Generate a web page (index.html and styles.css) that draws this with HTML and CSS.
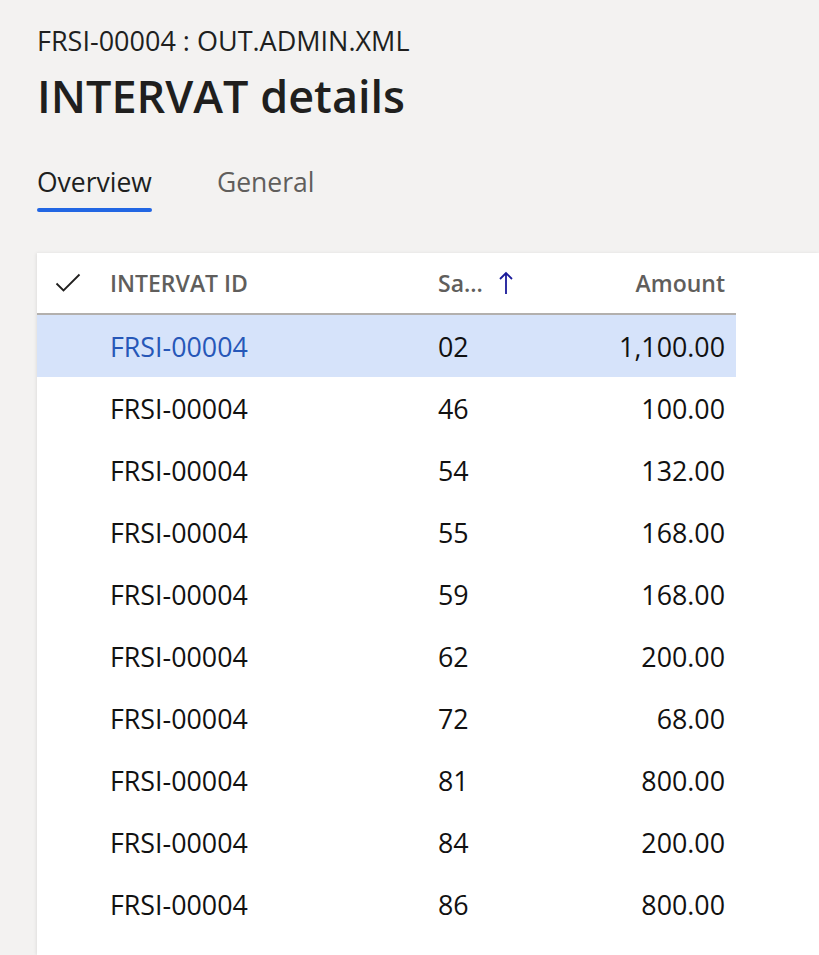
FILE: index.html
```html
<!DOCTYPE html>
<html>
<head>
<meta charset="utf-8">
<link rel="stylesheet" href="styles.css">
</head>
<body>
<div class="page">
  <div class="caption">FRSI-00004 : OUT.ADMIN.XML</div>
  <h1 class="title">INTERVAT details</h1>
  <div class="tabs">
    <div class="tab active">Overview</div>
    <div class="tab">General</div>
  </div>
  <div class="panel">
    <div class="grid">
      <div class="row head">
        <div class="c-check">
          <svg width="26" height="20" viewBox="0 0 26 20"><path d="M1.5 10.5 L8.5 17.5 L24.5 1.5" fill="none" stroke="#201f1e" stroke-width="1.8"/></svg>
        </div>
        <div class="c-id">INTERVAT ID</div>
        <div class="c-sa">Sa... <span class="arrow"><svg width="14" height="24" viewBox="0 0 14 24"><path d="M7 23 V2 M1 8 L7 2 L13 8" fill="none" stroke="#1a1a9a" stroke-width="1.8"/></svg></span></div>
        <div class="c-amt">Amount</div>
      </div>
      <div class="row sel">
        <div class="c-check"></div>
        <div class="c-id link">FRSI-00004</div>
        <div class="c-sa">02</div>
        <div class="c-amt">1,100.00</div>
      </div>
      <div class="row"><div class="c-check"></div><div class="c-id">FRSI-00004</div><div class="c-sa">46</div><div class="c-amt">100.00</div></div>
      <div class="row"><div class="c-check"></div><div class="c-id">FRSI-00004</div><div class="c-sa">54</div><div class="c-amt">132.00</div></div>
      <div class="row"><div class="c-check"></div><div class="c-id">FRSI-00004</div><div class="c-sa">55</div><div class="c-amt">168.00</div></div>
      <div class="row"><div class="c-check"></div><div class="c-id">FRSI-00004</div><div class="c-sa">59</div><div class="c-amt">168.00</div></div>
      <div class="row"><div class="c-check"></div><div class="c-id">FRSI-00004</div><div class="c-sa">62</div><div class="c-amt">200.00</div></div>
      <div class="row"><div class="c-check"></div><div class="c-id">FRSI-00004</div><div class="c-sa">72</div><div class="c-amt">68.00</div></div>
      <div class="row"><div class="c-check"></div><div class="c-id">FRSI-00004</div><div class="c-sa">81</div><div class="c-amt">800.00</div></div>
      <div class="row"><div class="c-check"></div><div class="c-id">FRSI-00004</div><div class="c-sa">84</div><div class="c-amt">200.00</div></div>
      <div class="row"><div class="c-check"></div><div class="c-id">FRSI-00004</div><div class="c-sa">86</div><div class="c-amt">800.00</div></div>
    </div>
  </div>
</div>
</body>
</html>
```
FILE: styles.css
```css
html, body {
  margin: 0;
  padding: 0;
  background: #f3f2f1;
  height: 100%;
  overflow: hidden;
}
body {
  font-family: "Segoe UI", "Open Sans", "Noto Sans", sans-serif;
  color: #201f1e;
}
.page {
  padding: 24px 0 0 37px;
  display: flex;
  flex-direction: column;
  height: 100%;
  box-sizing: border-box;
}
.caption {
  font-size: 27px;
  line-height: 34px;
  height: 34px;
}
.title {
  margin: 0;
  font-size: 45px;
  font-weight: 600;
  line-height: 54px;
  margin-top: 11px;
}
.tabs {
  display: flex;
  gap: 65px;
  margin-top: 41px;
}
.tab {
  font-size: 26.5px;
  line-height: 36px;
  color: #605e5c;
  padding-bottom: 12px;
  position: relative;
}
.tab.active {
  color: #201f1e;
}
.tab.active::after {
  content: "";
  position: absolute;
  left: 0;
  right: 0;
  bottom: 0;
  height: 4px;
  border-radius: 2px;
  background: #2266e3;
}
.panel {
  margin-top: 41px;
  flex: 1;
  background: #fff;
  box-shadow: -1px 0 3px rgba(0,0,0,0.08);
}
.grid {
  width: 699px;
}
.row {
  display: flex;
  align-items: center;
  height: 62px;
  font-size: 26.8px;
  color: #111;
}
.row.head {
  height: 60px;
  border-bottom: 2px solid #b3b0ad;
  font-weight: 600;
  color: #605e5c;
  font-size: 23px;
}
.row.sel {
  background: #d6e3fa;
}
.c-check {
  width: 73px;
  display: flex;
  justify-content: flex-start;
  padding-left: 18px;
  box-sizing: border-box;
}
.c-id {
  width: 328px;
}
.c-sa {
  width: 120px;
  display: flex;
  align-items: center;
}
.arrow {
  margin-left: 16px;
  display: flex;
}
.c-amt {
  width: 167px;
  text-align: right;
}
.link {
  color: #2657b8;
}
```
